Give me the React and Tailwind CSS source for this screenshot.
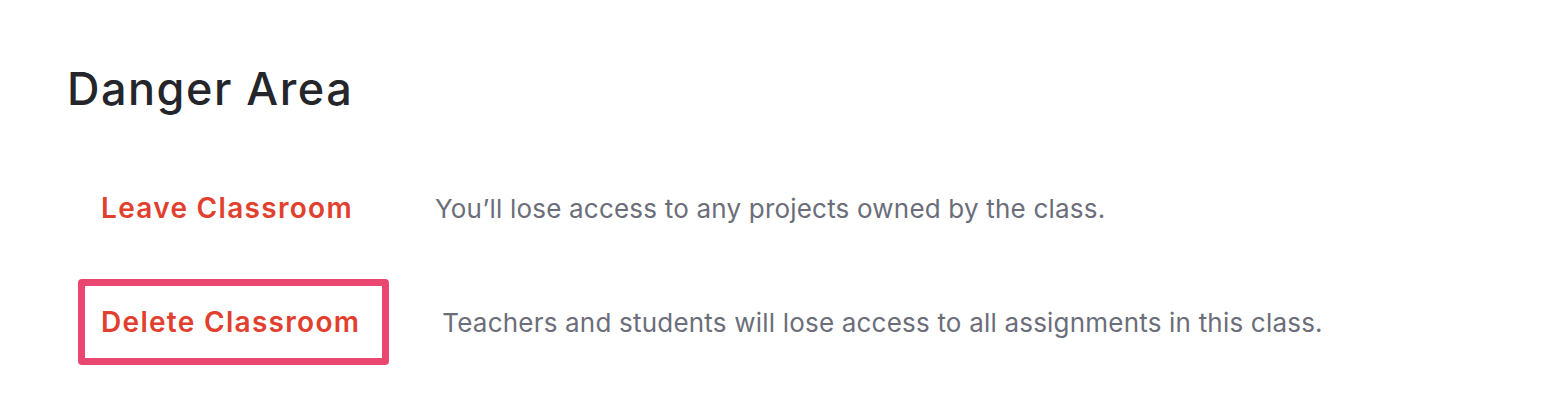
export default function App() {
  const rows = [
    { label: "Leave Classroom", desc: "You’ll lose access to any projects owned by the class.", focused: false },
    { label: "Delete Classroom", desc: "Teachers and students will lose access to all assignments in this class.", focused: true },
  ];
  return (
    <div className="w-[1542px] h-[414px] bg-white px-[67px] pt-[61px] font-['Inter',sans-serif]">
      <h1 className="text-[45px] leading-[56px] font-medium text-[#25262b] tracking-[1.5px]">Danger Area</h1>
      <div className="mt-[48px] ml-[11px] flex flex-col gap-[28px]">
        {rows.map((r) => (
          <div key={r.label} className="flex items-center">
            <button
              className={
                "border-[7px] rounded-[4px] pl-[16px] pr-[22px] h-[86px] text-[28px] font-semibold tracking-[1.3px] text-[#e2402f] whitespace-nowrap " +
                (r.focused ? "border-[#ea4770]" : "border-transparent")
              }
            >
              {r.label}
            </button>
            <p className="ml-[53px] text-[26px] tracking-[0.2px] text-[#6b6e7a] whitespace-nowrap">{r.desc}</p>
          </div>
        ))}
      </div>
    </div>
  );
}
